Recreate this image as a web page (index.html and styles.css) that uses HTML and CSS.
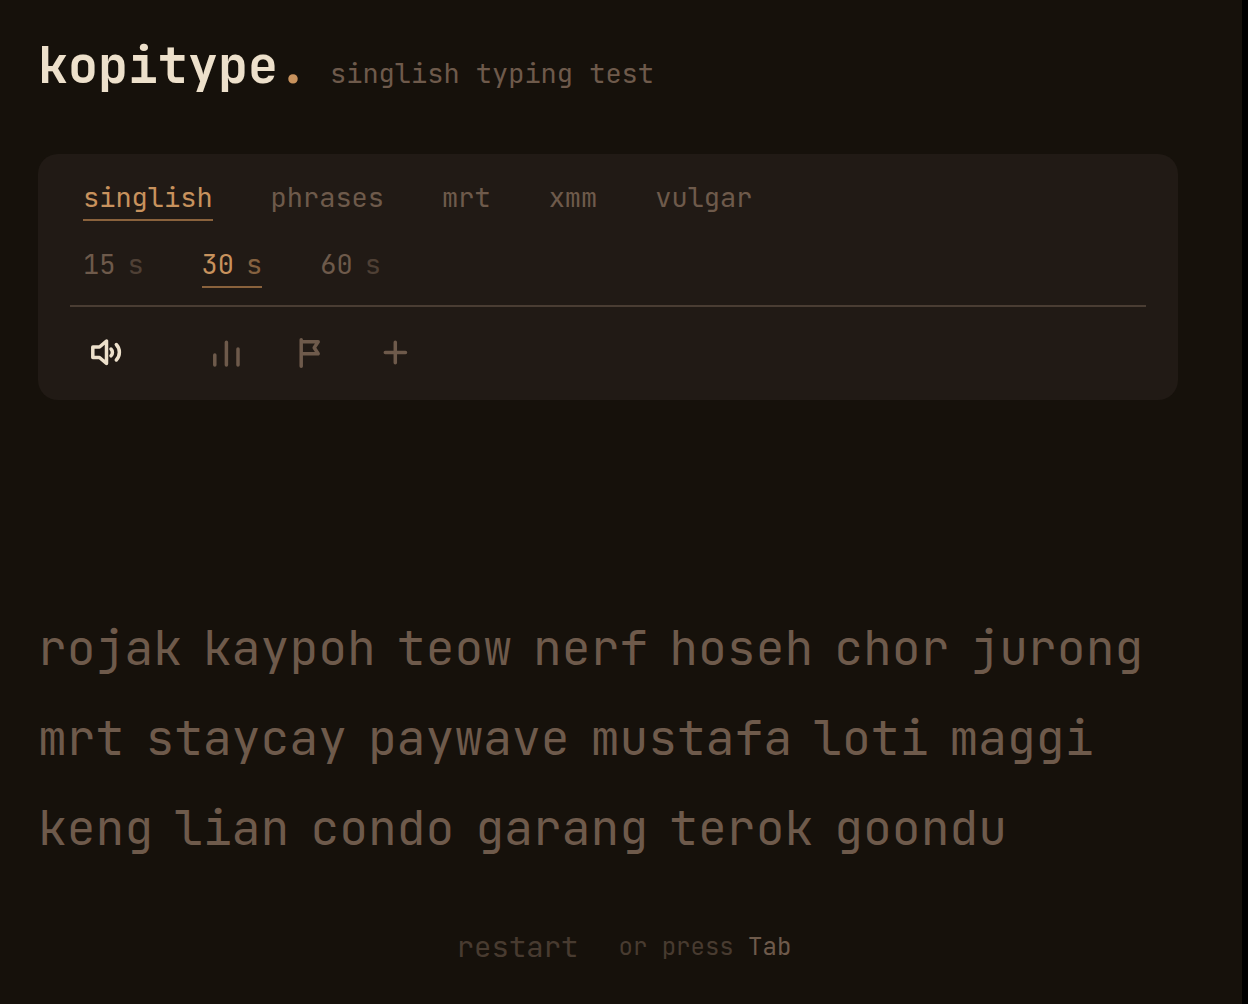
FILE: index.html
```html
<!DOCTYPE html>
<html lang="en">
<head>
    <meta charset="UTF-8">
    <meta name="viewport" content="width=device-width, initial-scale=1.0">
    <title>kopitype</title>
    <link rel="stylesheet" href="styles.css">
</head>
<body>
    <div class="container">
        <header class="header">
            <h1 class="logo">kopitype<span class="dot">.</span></h1>
            <span class="tagline">singlish typing test</span>
        </header>

        <nav class="config">
            <div class="options">
                <button class="option active" type="button">singlish</button>
                <button class="option" type="button">phrases</button>
                <button class="option" type="button">mrt</button>
                <button class="option" type="button">xmm</button>
                <button class="option" type="button">vulgar</button>
            </div>
            <div class="options">
                <button class="option" type="button">15<span class="unit">s</span></button>
                <button class="option active" type="button">30<span class="unit">s</span></button>
                <button class="option" type="button">60<span class="unit">s</span></button>
            </div>
            <div class="tools">
                <button class="tool sound" type="button" aria-label="sound">
                    <svg viewBox="0 0 36 36"><path d="M18.500 7v22.500l-7-6H4.800V13H11.500z"/><path d="M23 15a4.800 4.800 0 0 1 0 6.800M28.300 10.500a11.300 11.300 0 0 1 0 15.500"/></svg>
                </button>
                <button class="tool" type="button" aria-label="stats">
                    <svg viewBox="0 0 36 36"><path d="M6.800 31V21M18.400 31V8.200M30 31V15"/></svg>
                </button>
                <button class="tool" type="button" aria-label="report">
                    <svg viewBox="0 0 36 36"><path d="M9.200 32.200V5.800M9.200 7.800h17l-4 6 4 6h-17"/></svg>
                </button>
                <button class="tool" type="button" aria-label="add word">
                    <svg viewBox="0 0 36 36"><path d="M19.300 8.200v20.600M9.300 18.500h20.200"/></svg>
                </button>
            </div>
        </nav>

        <main class="words">
            <span>rojak</span>
            <span>kaypoh</span>
            <span>teow</span>
            <span>nerf</span>
            <span>hoseh</span>
            <span>chor</span>
            <span>jurong</span>
            <span>mrt</span>
            <span>staycay</span>
            <span>paywave</span>
            <span>mustafa</span>
            <span>loti</span>
            <span>maggi</span>
            <span>keng</span>
            <span>lian</span>
            <span>condo</span>
            <span>garang</span>
            <span>terok</span>
            <span>goondu</span>
        </main>
    </div>

    <footer class="footer">
        <button class="restart" type="button">restart</button>
        <span class="hint">or press <kbd>Tab</kbd></span>
    </footer>
</body>
</html>
```

FILE: styles.css
```css
:root {
    --bg: #16110b;
    --panel: #211a15;
    --line: #4a3d33;
    --text: #6e5a4b;
    --faint: #483b30;
    --cream: #ede0cb;
    --accent: #c8925d;
    --accent-line: #8a623c;
}

* {
    box-sizing: border-box;
}

html {
    background: #000;
}

body {
    margin: 0 6px 0 0;
    min-height: 100vh;
    background: var(--bg);
    color: var(--text);
    font-family: 'JetBrains Mono', 'DejaVu Sans Mono', monospace;
}

button {
    padding: 0;
    border: none;
    background: none;
    color: inherit;
    font: inherit;
    cursor: pointer;
}

.container {
    padding: 33px 64px 0 38px;
}

.header {
    display: flex;
    align-items: baseline;
    gap: 22px;
    margin-bottom: 57px;
}

.logo {
    margin: 0;
    font-size: 50px;
    line-height: 64px;
    font-weight: 700;
    color: var(--cream);
}

.dot {
    color: var(--accent);
}

.tagline {
    font-size: 27px;
    line-height: 32px;
}

.config {
    padding: 28px 32px 0;
    border-radius: 20px;
    background: var(--panel);
}

.options {
    display: flex;
    gap: 58px;
    padding: 0 13px;
    margin-bottom: 28px;
}

.options:nth-child(2) {
    margin-bottom: 17px;
}

.option {
    display: flex;
    gap: 12px;
    padding-bottom: 7px;
    border-bottom: 2px solid transparent;
    font-size: 27px;
    line-height: 30px;
}

.option.active {
    color: var(--accent);
    border-bottom-color: var(--accent-line);
}

.unit {
    opacity: 0.6;
}

.tools {
    display: flex;
    gap: 48px;
    padding: 27px 18px 30px;
    border-top: 2px solid var(--line);
}

.tool svg {
    display: block;
    width: 36px;
    height: 36px;
    fill: none;
    stroke: currentColor;
    stroke-width: 3.5;
    stroke-linecap: round;
    stroke-linejoin: round;
}

.tool.sound {
    margin-right: 36px;
    color: var(--cream);
}

.words {
    display: flex;
    flex-wrap: wrap;
    column-gap: 21px;
    margin-top: 203px;
    font-size: 48px;
    line-height: 90px;
}

.footer {
    display: flex;
    justify-content: center;
    align-items: center;
    gap: 40px;
    padding: 56px 0 30px 6px;
    color: var(--faint);
}

.restart {
    font-size: 29px;
    line-height: 36px;
}

.hint {
    font-size: 24px;
    line-height: 36px;
}

.hint kbd {
    font: inherit;
    color: var(--text);
}
```
